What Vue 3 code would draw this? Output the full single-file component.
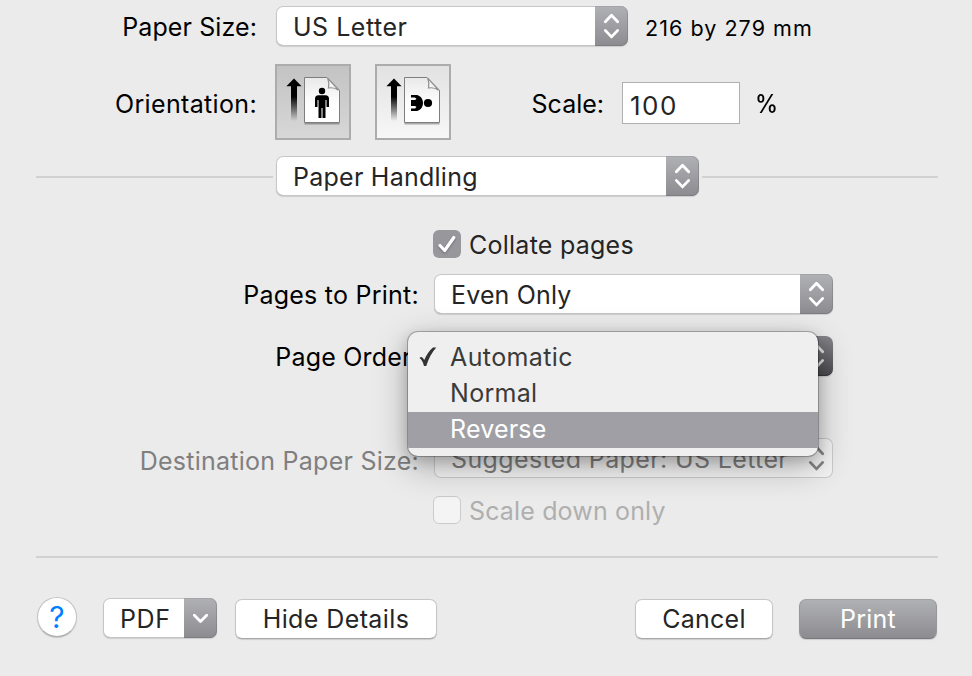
<script setup>
const menuItems = [
  { label: 'Automatic', checked: true, cls: 't-automatic' },
  { label: 'Normal', checked: false, cls: 't-normal' },
  { label: 'Reverse', checked: false, active: true, cls: 't-reverse' },
]
</script>

<template>
  <main class="dialog">
    <div class="row paper-row">
      <span class="label top-label t-paper">Paper Size:</span>
      <div class="select paper-select">
        <span class="value t-letter">US Letter</span>
        <span class="stepper">
          <svg width="33" height="40" viewBox="0 0 33 40"><path d="M10.3 15.7 16.5 9.2 22.7 15.7M10.3 24.4 16.5 30.9 22.7 24.4" /></svg>
        </span>
      </div>
      <span class="dims">216 by 279 mm</span>
    </div>

    <div class="row orient-row">
      <span class="label top-label t-orient">Orientation:</span>
      <button class="orient pressed">
        <svg width="72" height="72" viewBox="0 0 72 72">
          <defs>
            <linearGradient id="shaft" x1="0" y1="0" x2="0" y2="1">
              <stop offset="0" stop-color="#000" />
              <stop offset=".3" stop-color="#000" />
              <stop offset=".95" stop-color="#000" stop-opacity="0" />
            </linearGradient>
            <linearGradient id="sheet" x1="0" y1="0" x2="0" y2="1">
              <stop offset="0" stop-color="#e9e9e9" />
              <stop offset=".6" stop-color="#fff" />
            </linearGradient>
          </defs>
          <path d="M14 19h6v38h-6z" fill="url(#shaft)" />
          <path d="M17 12.6 24.6 20.2H9.4z" />
          <path class="sheet-shadow" d="M27.5 57.5h35" />
          <path class="sheet" d="M27.5 11.5h22.3l12.7 12.7v32.3h-35z" fill="url(#sheet)" />
          <path class="fold" d="M50.7 12.200q2 5 .8 9.800 5.500-1 10 2.200z" />
          <circle cx="45" cy="25" r="3.2" />
          <path d="M41.5 29.3h7q3.5 0 3.5 3.5V41h-2.5v-7h-1v18h-3V42h-1v10h-3V34h-1v7H38v-8.2q0-3.5 3.5-3.5z" />
        </svg>
      </button>
      <button class="orient">
        <svg width="72" height="72" viewBox="0 0 72 72">
          <path d="M14 19h6v38h-6z" fill="url(#shaft)" />
          <path d="M17 12.6 24.6 20.2H9.4z" />
          <path class="sheet-shadow" d="M27.5 57.5h35" />
          <path class="sheet" d="M27.5 11.5h22.3l12.7 12.7v32.3h-35z" fill="url(#sheet)" />
          <path class="fold" d="M50.7 12.200q2 5 .8 9.800 5.500-1 10 2.200z" />
          <circle cx="51" cy="37" r="4.1" />
          <path d="M34 29h6c4 1 6 4.500 6 8s-2 7-6 8h-6v-2.500h4l1.500-1.500-1.500-1H34v-6h4l1.500-1-1.500-1.500h-4z" />
        </svg>
      </button>
      <span class="label scale-label">Scale:</span>
      <div class="field"><span class="t-hundred">100</span></div>
      <span class="label percent">%</span>
    </div>

    <div class="row section-row">
      <i class="rule left-rule"></i>
      <div class="select section-select">
        <span class="value t-handling">Paper Handling</span>
        <span class="stepper">
          <svg width="33" height="40" viewBox="0 0 33 40"><path d="M10.3 15.7 16.5 9.2 22.7 15.7M10.3 24.4 16.5 30.9 22.7 24.4" /></svg>
        </span>
      </div>
      <i class="rule right-rule"></i>
    </div>

    <div class="row collate-row">
      <span class="checkbox checked">
        <svg width="28" height="28" viewBox="0 0 28 28"><path d="M7 15.500 11.700 20.500 20.800 7.500" /></svg>
      </span>
      <span class="t-collate check-label">Collate pages</span>
    </div>

    <div class="row pages-row">
      <span class="label form-label t-pages">Pages to Print:</span>
      <div class="select form-select">
        <span class="value t-even">Even Only</span>
        <span class="stepper">
          <svg width="33" height="40" viewBox="0 0 33 40"><path d="M10.3 15.7 16.5 9.2 22.7 15.7M10.3 24.4 16.5 30.9 22.7 24.4" /></svg>
        </span>
      </div>
    </div>

    <div class="row order-row">
      <span class="label form-label t-order">Page Order:</span>
      <div class="select form-select open">
        <span class="value"></span>
        <span class="stepper">
          <svg width="33" height="40" viewBox="0 0 33 40"><path d="M10.3 15.7 16.5 9.2 22.7 15.7M10.3 24.4 16.5 30.9 22.7 24.4" /></svg>
        </span>
      </div>
      <ul class="menu">
        <li v-for="item in menuItems" :key="item.label" :class="{ active: item.active }">
          <span class="mark">
            <svg v-if="item.checked" width="18" height="22" viewBox="0 0 18 22"><path d="M0.500 12q2.500-2.500 4.700 2Q9 5.500 14 1.500h3.300Q10.800 8.500 7.300 20H5Q3.500 14 .5 12z" /></svg>
          </span>
          <span :class="item.cls">{{ item.label }}</span>
        </li>
      </ul>
    </div>

    <div class="row dest-row">
      <span class="label form-label t-dest">Destination Paper Size:</span>
      <div class="select form-select disabled">
        <span class="value t-suggested">Suggested Paper: US Letter</span>
        <span class="stepper">
          <svg width="33" height="40" viewBox="0 0 33 40"><path d="M10.3 15.7 16.5 9.2 22.7 15.7M10.3 24.4 16.5 30.9 22.7 24.4" /></svg>
        </span>
      </div>
    </div>

    <div class="row down-row">
      <span class="checkbox"></span>
      <span class="t-down check-label">Scale down only</span>
    </div>

    <i class="rule foot-rule"></i>

    <footer class="footer">
      <button class="help">?</button>
      <div class="select pdf">
        <span class="value t-pdf">PDF</span>
        <span class="stepper">
          <svg width="33" height="40" viewBox="0 0 33 40"><path d="M10.300 17.200 16.500 23.400 22.700 17.200" /></svg>
        </span>
      </div>
      <button class="btn hide"><span class="t-hide">Hide Details</span></button>
      <button class="btn cancel"><span class="t-cancel">Cancel</span></button>
      <button class="btn print"><span class="t-print">Print</span></button>
    </footer>
  </main>
</template>

<style>
body { background: #ebebeb; }
</style>

<style scoped>
.dialog {
  width: 972px;
  height: 676px;
  box-sizing: border-box;
  padding-top: 6px;
  overflow: hidden;
  background: #ebebeb;
  color: #000;
  font: 430 25px/36px Inter, "Liberation Sans", sans-serif;
  display: flex;
  flex-direction: column;
}
.dialog * { box-sizing: border-box; }
span { white-space: nowrap; }
svg { display: block; }
button { font: inherit; padding: 0; margin: 0; }
.row { display: flex; align-items: center; height: 40px; flex: none; }
.label { padding-top: 2px; text-align: right; }
.top-label { width: 257px; }
.form-label { width: 419px; }

.t-paper { letter-spacing: .1px; }
.t-letter { letter-spacing: .5px; }
.t-orient { letter-spacing: .35px; }
.t-hundred { font-size: 26px; letter-spacing: 1.500px; }
.t-handling { letter-spacing: .25px; }
.t-collate { letter-spacing: .25px; }
.t-pages { letter-spacing: .25px; }
.t-even { letter-spacing: .15px; }
.t-order { letter-spacing: .2px; }
.t-automatic { letter-spacing: .4px; }
.t-normal { letter-spacing: .3px; }
.t-reverse { letter-spacing: .2px; }
.t-dest { letter-spacing: .25px; }
.t-suggested { letter-spacing: .37px; }
.t-down { letter-spacing: .15px; }
.t-pdf { letter-spacing: .6px; }
.t-hide { letter-spacing: .4px; }
.t-cancel { letter-spacing: .25px; }
.t-print { letter-spacing: .25px; }

.select {
  display: flex;
  height: 40px;
  border-radius: 7px;
  overflow: hidden;
  background: #fff;
  box-shadow: inset 0 0 0 1px #c6c6c6, inset 0 -1px #a8a8a8, 0 1px 1px rgba(0, 0, 0, .13);
  color: #252525;
}
.value { flex: 1; padding: 3px 0 0 17px; }
.stepper {
  width: 33px;
  height: 40px;
  background: linear-gradient(#b0b1b5, #8c8b90);
  border-radius: 0 7px 7px 0;
  box-shadow: inset 0 1px #a3a4a8, inset 0 -1px #7d7c81, inset -1px 0 rgba(110, 110, 115, .4);
}
.stepper path, .checkbox path {
  fill: none;
  stroke: #fff;
  stroke-width: 2.8;
  stroke-linecap: round;
  stroke-linejoin: round;
}
.paper-select { width: 352px; margin-left: 19px; }
.dims { font-size: 21.500px; letter-spacing: 1.050px; margin-left: 17px; padding-top: 4px; }

.orient-row { height: 76px; margin-top: 18px; }
.orient-row .label { padding-top: 3px; }
.orient {
  width: 76px;
  height: 76px;
  border: 2px solid #acacac;
  background: linear-gradient(#e2e2e2, #f7f7f7);
  margin-left: 24px;
}
.pressed { margin-left: 18px; background: linear-gradient(#c3c3c3, #d7d7d7); }
.sheet { stroke: #7e7e7e; stroke-width: 1; }
.sheet-shadow { stroke: #000; stroke-opacity: .3; stroke-width: 2; }
.fold { fill: #f4f4f4; stroke: #8f8f8f; stroke-width: 1.2; }
.scale-label { width: 153px; }
.field {
  width: 118px;
  height: 42px;
  margin: 2px 0 0 18px;
  padding: 5px 0 0 7px;
  background: #fff;
  border: 1px solid #b0b0b0;
  color: #252525;
}
.percent { margin-left: 15px; font-weight: 500; transform-origin: left; transform: scaleX(.93); }

.section-row { margin-top: 16px; }
.rule { display: block; height: 2px; background: #d1d1d1; flex: none; }
.left-rule { width: 237px; margin: 2px 0 0 36px; }
.section-select { width: 423px; margin: 0 3px; }
.right-rule { width: 236px; margin-top: 2px; }

.collate-row { height: 28px; margin: 34px 0 0 433px; color: #252525; }
.checkbox {
  width: 28px;
  height: 28px;
  border-radius: 6px;
  background: #f4f4f4;
  border: 1px solid #cbcbcb;
}
.checked { border: 0; background: #97979c; }
.checkbox path { stroke-width: 3.200; filter: drop-shadow(0 1px 1px rgba(0, 0, 0, .3)); }
.check-label { margin-left: 8px; padding-top: 2px; }

.pages-row { margin-top: 16px; }
.form-select { width: 399px; margin-left: 15px; }
.order-row { margin-top: 22px; position: relative; z-index: 2; }
.open .stepper { background: linear-gradient(#85858a, #4b4a4f); box-shadow: inset 0 -1px #39383d; }
.open .stepper path { stroke: #e2e2e2; }
.menu {
  position: absolute;
  left: 408px;
  top: -4px;
  width: 410px;
  height: 124px;
  margin: 0;
  padding: 8px 0 0;
  list-style: none;
  border-radius: 10px;
  overflow: hidden;
  background: #efefef;
  box-shadow: 0 0 0 1px rgba(0, 0, 0, .25), 0 10px 34px rgba(0, 0, 0, .3), 0 4px 14px rgba(0, 0, 0, .18);
  color: #3a3a3a;
}
.menu li { display: flex; height: 36px; }
.menu li.active { background: #a09fa5; color: #fff; }
.menu li > span { margin-top: -1px; }
.mark { width: 42px; padding-left: 11px; }
.mark svg { margin-top: 7px; fill: #333; }

.dest-row { margin-top: 62px; color: #7f7f7f; }
.dest-row .label { padding-top: 6px; }
.disabled { background: #f3f3f3; box-shadow: inset 0 0 0 1px #cbcbcb; color: #7f7f7f; }
.disabled .stepper { background: none; box-shadow: none; }
.disabled .stepper path { stroke: #858585; }
.down-row { height: 28px; margin: 18px 0 0 433px; color: #afafaf; }

.foot-rule { width: 902px; margin: 32px 0 0 36px; }
.footer { display: flex; align-items: flex-start; margin-top: 39px; }
.help {
  width: 40px;
  height: 40px;
  margin-left: 37px;
  border-radius: 50%;
  border: 1px solid #c4c4c4;
  border-bottom-color: #aaa;
  box-shadow: 0 1px 1px rgba(0, 0, 0, .15);
  background: #fff;
  color: #007fff;
  font-size: 30px;
}
.pdf { width: 114px; margin: 1px 0 0 26px; }
.btn {
  height: 40px;
  margin: 2px 0 0 18px;
  border-radius: 7px;
  border: 1px solid #c6c6c6;
  border-bottom-color: #a8a8a8;
  background: #fff;
  color: #252525;
  box-shadow: 0 1px 1px rgba(0, 0, 0, .13);
}
.hide { width: 202px; }
.cancel { width: 138px; margin-left: 198px; }
.print {
  width: 138px;
  margin-left: 26px;
  border-color: #a0a1a5 #97979b #7a797e;
  background: linear-gradient(#b0b1b5, #8c8b90);
  color: #fff;
}
</style>
